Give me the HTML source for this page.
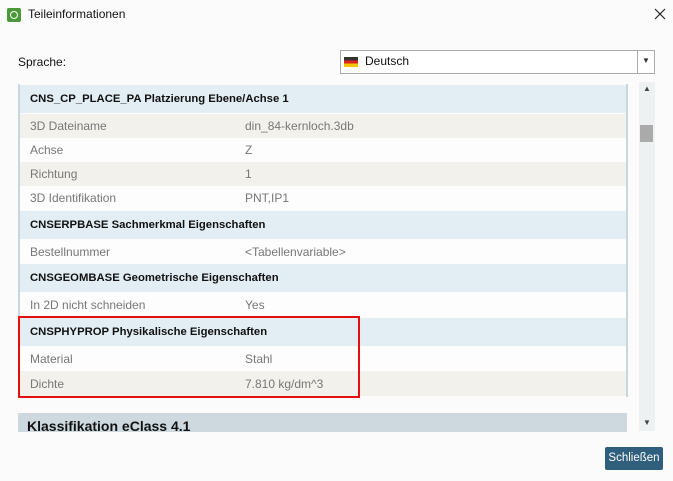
<html><head><style>
body{margin:0;width:673px;height:481px;background:#fbfbfb;font-family:"Segoe UI","Liberation Sans",sans-serif;position:relative;overflow:hidden;font-size:12px}
.a{position:absolute}
.r{position:absolute;left:20px;width:606px;color:#777;}
.r span{position:absolute;top:50%;transform:translateY(-50%)}
.h{background:#e3eef4;color:#111;font-weight:bold;font-size:11.3px}
.b{background:#f2f1ec}.w{background:#fdfdfd}
</style></head><body>
<div class="a" style="left:7px;top:8px;width:14px;height:14px;background:#4a9a3a;border-radius:2px"><div style="position:absolute;left:3px;top:3px;width:6px;height:6px;border:1px solid #fff;border-radius:50%"></div></div>
<div class="a" style="left:28px;top:7px;color:#111">Teileinformationen</div>
<svg class="a" style="left:654px;top:8px" width="12" height="12"><path d="M1 1L11 11M11 1L1 11" stroke="#222" stroke-width="1.2"/></svg>
<div class="a" style="left:18px;top:55px;color:#111">Sprache:</div>
<div class="a" style="left:340px;top:50px;width:313px;height:22px;border:1px solid #aaa;background:#fff"></div>
<div class="a" style="left:344px;top:57px;width:14px;height:10px;background:linear-gradient(#333 33%,#d22 33% 66%,#f5c400 66%)"></div>
<div class="a" style="left:365px;top:54px;color:#111">Deutsch</div>
<div class="a" style="left:637px;top:51px;width:1px;height:22px;background:#aaa"></div>
<div class="a" style="left:642px;top:56px;font-size:8px;color:#333">▼</div>
<div class="a" style="left:18px;top:84px;width:2px;height:313px;background:#c8d6de"></div>
<div class="a" style="left:626px;top:84px;width:2px;height:313px;background:#c8d6de"></div>
<div class="r h" style="top:85px;height:28px"><span style="left:10px">CNS_CP_PLACE_PA Platzierung Ebene/Achse 1</span></div>
<div class="r b" style="top:114px;height:24px"><span style="left:10px">3D Dateiname</span><span style="left:225px">din_84-kernloch.3db</span></div>
<div class="r w" style="top:138px;height:24px"><span style="left:10px">Achse</span><span style="left:225px">Z</span></div>
<div class="r b" style="top:162px;height:24px"><span style="left:10px">Richtung</span><span style="left:225px">1</span></div>
<div class="r w" style="top:186px;height:24px"><span style="left:10px">3D Identifikation</span><span style="left:225px">PNT,IP1</span></div>
<div class="r h" style="top:211px;height:28px"><span style="left:10px">CNSERPBASE Sachmerkmal Eigenschaften</span></div>
<div class="r w" style="top:240px;height:24px"><span style="left:10px">Bestellnummer</span><span style="left:225px">&lt;Tabellenvariable&gt;</span></div>
<div class="r h" style="top:264px;height:28px"><span style="left:10px">CNSGEOMBASE Geometrische Eigenschaften</span></div>
<div class="r w" style="top:293px;height:24px"><span style="left:10px">In 2D nicht schneiden</span><span style="left:225px">Yes</span></div>
<div class="r h" style="top:318px;height:28px"><span style="left:10px">CNSPHYPROP Physikalische Eigenschaften</span></div>
<div class="r w" style="top:347px;height:24px"><span style="left:10px">Material</span><span style="left:225px">Stahl</span></div>
<div class="r b" style="top:371px;height:25px"><span style="left:10px">Dichte</span><span style="left:225px">7.810 kg/dm^3</span></div>
<div class="a" style="left:18px;top:316px;width:338px;height:78px;border:2px solid #e41010"></div>
<div class="a" style="left:18px;top:413px;width:609px;height:19px;background:#cdd9df;overflow:hidden"><div style="position:absolute;left:9px;top:5px;font-size:14px;font-weight:bold;color:#111">Klassifikation eClass 4.1</div></div>
<div class="a" style="left:639px;top:82px;width:16px;height:349px;background:#eef1f2"></div>
<div class="a" style="left:643px;top:84px;font-size:8px;color:#444">▲</div>
<div class="a" style="left:640px;top:125px;width:13px;height:17px;background:#aaa"></div>
<div class="a" style="left:643px;top:418px;font-size:8px;color:#444">▼</div>
<div class="a" style="left:605px;top:447px;width:58px;height:23px;background:#2f5f7c;border-radius:2px;color:#fff;text-align:center;line-height:23px;font-size:11.5px">Schließen</div>
</body></html>
